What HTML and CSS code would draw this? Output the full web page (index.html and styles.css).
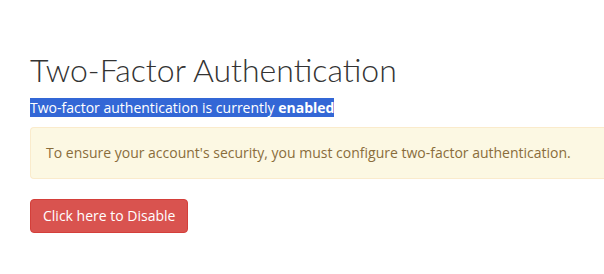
FILE: index.html
```html
<!DOCTYPE html>
<html>
<head>
<meta charset="utf-8">
<link rel="stylesheet" href="styles.css">
</head>
<body>
<div class="container">
  <h1 class="title">Two-Factor Authentication</h1>
  <p class="status"><span class="sel">Two-factor authentication is currently <strong>enabled</strong></span></p>
  <div class="alert">To ensure your account's security, you must configure two-factor authentication.</div>
  <button class="btn-danger">Click here to Disable</button>
</div>
</body>
</html>
```
FILE: styles.css
```css
html, body {
  margin: 0;
  padding: 0;
  background: #fff;
}
body {
  font-family: "Open Sans", "Liberation Sans", sans-serif;
  font-size: 14px;
  line-height: 20px;
  color: #333;
}
.container {
  padding: 50px 0 0 30px;
}
.title {
  font-family: Lato, "Open Sans", sans-serif;
  font-weight: 300;
  font-size: 32px;
  line-height: 40px;
  color: #333;
  margin: 0 0 8px 0;
}
.status {
  margin: 0 0 10px 0;
  line-height: 19px;
}
.sel {
  background: #3367d6;
  color: #fff;
}
.sel strong {
  font-weight: 700;
}
.alert {
  background: #fcf8e3;
  border: 1px solid #faebcc;
  border-right: none;
  border-radius: 4px 0 0 4px;
  color: #8a6d3b;
  padding: 15px 0 15px 15px;
  margin-bottom: 20px;
}
.btn-danger {
  font-family: "Open Sans", "Liberation Sans", sans-serif;
  font-size: 14px;
  line-height: 20px;
  color: #fff;
  background: #d9534f;
  border: 1px solid #d43f3a;
  border-radius: 4px;
  padding: 6px 12px;
  cursor: pointer;
}
```
